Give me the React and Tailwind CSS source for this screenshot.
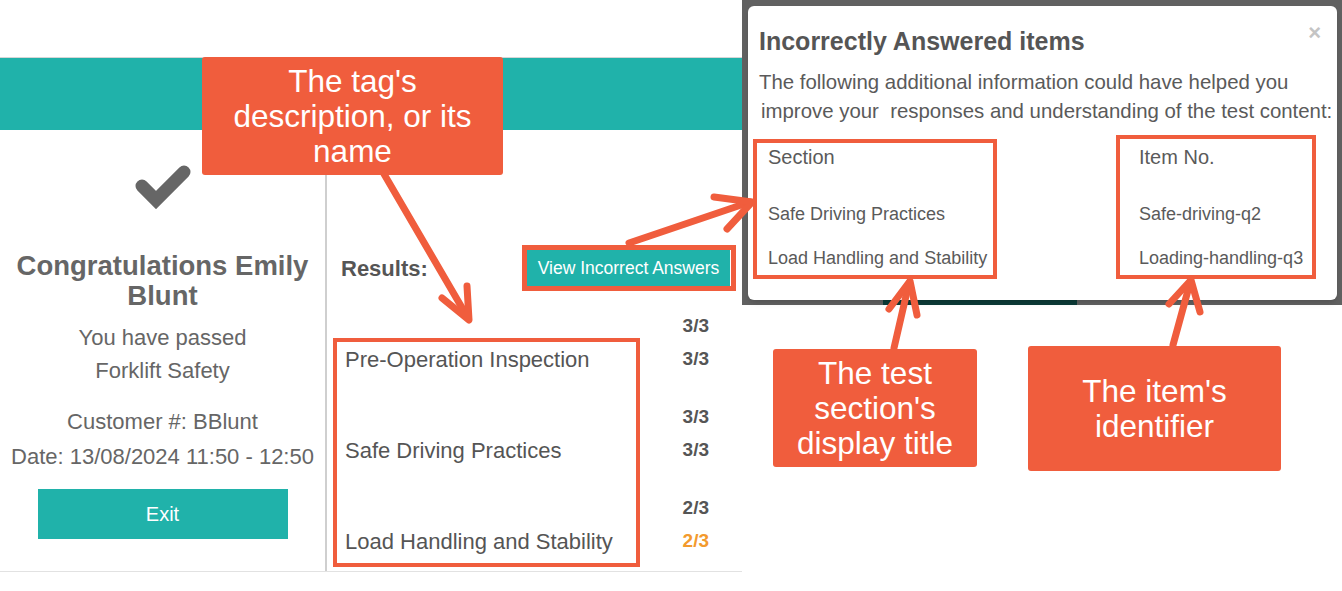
import React from 'react';

const font = { fontFamily: '"Liberation Sans", Arial, sans-serif' };

const results = [
  { name: 'Pre-Operation Inspection', total: '3/3', score: '3/3', low: false },
  { name: 'Safe Driving Practices', total: '3/3', score: '3/3', low: false },
  { name: 'Load Handling and Stability', total: '2/3', score: '2/3', low: true },
];

const incorrect = [
  { section: 'Safe Driving Practices', item: 'Safe-driving-q2' },
  { section: 'Load Handling and Stability', item: 'Loading-handling-q3' },
];

function Check() {
  return (
    <svg width="60" height="46" viewBox="0 0 60 46" fill="none">
      <polyline
        points="9,23 23,37 51,9"
        stroke="#666"
        strokeWidth="13"
        strokeLinecap="round"
        strokeLinejoin="miter"
      />
    </svg>
  );
}

function ResultCard() {
  return (
    <div className="w-[742px] mt-[57px] bg-white">
      <div className="h-[73px] bg-[#20b2aa] border-t border-[#d6d6d6]"></div>
      <div className="flex h-[442px] border-b border-[#e2e2e2]">
        {/* left column */}
        <div className="w-[327px] border-r-2 border-[#cfcfcf] flex flex-col items-center text-[#666] pt-[33px]">
          <Check />
          <h2 className="mt-[42px] text-[27.5px] leading-[30px] font-bold text-center text-[#666] whitespace-nowrap">
            Congratulations Emily
            <br />
            Blunt
          </h2>
          <p className="mt-[10px] text-[22px] leading-[33px] text-center">
            You have passed
            <br />
            Forklift Safety
          </p>
          <p className="mt-[17px] text-[22px] leading-[35px] text-center whitespace-nowrap">
            Customer #: BBlunt
            <br />
            Date: 13/08/2024 11:50 - 12:50
          </p>
          <button className="mt-[15px] w-[250px] h-[50px] bg-[#20b2aa] text-white text-[20px]">
            Exit
          </button>
        </div>

        {/* right column */}
        <div className="flex-1 pl-[14px] pr-[12px] pt-[120px]">
          <div className="flex items-center justify-between h-[36px]">
            <span className="text-[22px] font-bold text-[#555]">Results:</span>
            <button className="w-[203px] h-[36px] bg-[#20b2aa] text-white text-[17.5px] whitespace-nowrap">
              View Incorrect Answers
            </button>
          </div>
          <div className="mt-[24px] pl-[4px] pr-[21px] flex flex-col gap-[25px]">
            {results.map((r) => (
              <div key={r.name}>
                <div className="h-[33px] flex items-center justify-end text-[19px] font-bold text-[#555]">
                  {r.total}
                </div>
                <div className="h-[33px] flex items-center justify-between">
                  <span className="text-[22px] text-[#555] whitespace-nowrap">{r.name}</span>
                  <span className={r.low ? 'text-[19px] font-bold text-[#f39a2e]' : 'text-[19px] font-bold text-[#555]'}>
                    {r.score}
                  </span>
                </div>
              </div>
            ))}
          </div>
        </div>
      </div>
    </div>
  );
}

function IncorrectModal() {
  return (
    <div className="absolute left-[742px] top-0 w-[600px] h-[305px] bg-[#616161]">
      <div className="absolute left-[141px] top-[300px] w-[194px] h-[5px] bg-[#0c3b37]"></div>
      <div className="relative ml-[6px] mt-[6px] w-[589px] h-[294px] bg-white rounded-[6px] shadow-md pl-[11px] pt-[20px] text-[#555]">
        <span className="absolute right-[16px] top-[16px] text-[22px] leading-none font-bold text-[#c4c4c4]">×</span>
        <h3 className="text-[25px] leading-[30px] font-bold text-[#555] whitespace-nowrap">Incorrectly Answered items</h3>
        <p className="mt-[12px] text-[20.4px] leading-[29px] text-[#5a5a5a] whitespace-nowrap">
          The following additional information could have helped you
          <br />
          <span className="pl-[2px]">improve your&nbsp; responses and understanding of the test content:</span>
        </p>
        <div className="mt-[19px] grid grid-cols-[371px_auto] pl-[9px] text-[#5a5a5a]">
          <div className="h-[24px] flex items-center text-[20px]">Section</div>
          <div className="h-[24px] flex items-center text-[20px]">Item No.</div>
          {incorrect.map((row, i) => (
            <React.Fragment key={row.item}>
              <div className={i === 0 ? 'mt-[33px] h-[24px] flex items-center text-[18px] whitespace-nowrap' : 'mt-[20px] h-[24px] flex items-center text-[18px] whitespace-nowrap'}>
                {row.section}
              </div>
              <div className={i === 0 ? 'mt-[33px] h-[24px] flex items-center text-[18px] whitespace-nowrap' : 'mt-[20px] h-[24px] flex items-center text-[18px] whitespace-nowrap'}>
                {row.item}
              </div>
            </React.Fragment>
          ))}
        </div>
      </div>
    </div>
  );
}

function Callout({ className, children }) {
  return (
    <div className={`absolute bg-[#f05d3d] rounded-[3px] text-white text-[31.5px] leading-[35px] text-center flex items-center justify-center whitespace-nowrap ${className}`}>
      <div>{children}</div>
    </div>
  );
}

function Arrows() {
  const c = '#f05d3d';
  return (
    <svg className="absolute inset-0 pointer-events-none" width="1342" height="591" viewBox="0 0 1342 591" fill="none">
      <g stroke={c} strokeWidth="7" strokeLinecap="round" strokeLinejoin="round">
        {/* tag callout to results */}
        <line x1="384" y1="174" x2="468" y2="318" />
        <polyline points="442,298 469,320 467,286" />
        {/* button to modal */}
        <line x1="629" y1="243" x2="750" y2="202" />
        <polyline points="714,197 752,202 727,229" />
        {/* test section callout */}
        <line x1="894" y1="348" x2="909" y2="283" />
        <polyline points="889,309 910,281 917,315" />
        {/* item callout */}
        <line x1="1173" y1="345" x2="1190" y2="283" />
        <polyline points="1169,304 1191,280 1200,312" />
      </g>
    </svg>
  );
}

export default function App() {
  return (
    <div className="relative w-[1342px] h-[591px] bg-white overflow-hidden" style={font}>
      <ResultCard />
      <IncorrectModal />

      {/* highlight outlines */}
      <div className="absolute left-[333px] top-[338px] w-[307px] h-[229px] border-4 border-[#f05d3d]"></div>
      <div className="absolute left-[522px] top-[245px] w-[214px] h-[46px] border-[5px] border-[#f05d3d]"></div>
      <div className="absolute left-[753px] top-[139px] w-[244px] h-[140px] border-4 border-[#f05d3d]"></div>
      <div className="absolute left-[1116px] top-[135px] w-[200px] h-[144px] border-4 border-[#f05d3d]"></div>

      <Arrows />

      <Callout className="left-[202px] top-[57px] w-[301px] h-[118px]">
        The tag's
        <br />
        description, or its
        <br />
        name
      </Callout>
      <Callout className="left-[773px] top-[349px] w-[204px] h-[118px]">
        The test
        <br />
        section's
        <br />
        display title
      </Callout>
      <Callout className="left-[1028px] top-[346px] w-[253px] h-[125px]">
        The item's
        <br />
        identifier
      </Callout>
    </div>
  );
}
